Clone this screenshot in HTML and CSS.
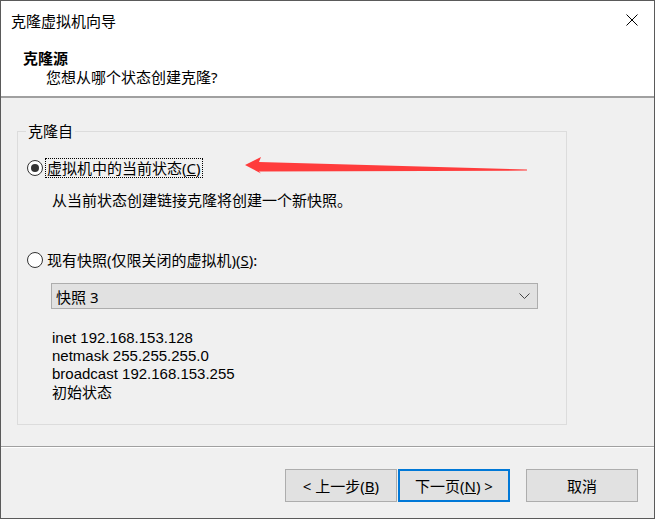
FILE: index.html
```html
<!DOCTYPE html>
<html lang="zh-CN">
<head>
<meta charset="UTF-8">
<meta name="viewport" content="width=device-width, initial-scale=1.0">
<title>克隆虚拟机向导</title>
<link rel="stylesheet" href="styles.css">
</head>
<body>

<div class="wizard">
  <div class="wizard-top">
    <div class="titlebar">
      <span class="titlebar-text">克隆虚拟机向导</span>
      <svg class="close-icon" width="12" height="12" viewBox="0 0 12 12">
        <path d="M0.5 0.5 L11.5 11.5 M11.5 0.5 L0.5 11.5" stroke="#000" stroke-width="1" fill="none"/>
      </svg>
    </div>
    <div class="header">
      <div class="header-title">克隆源</div>
      <div class="header-sub">您想从哪个状态创建克隆?</div>
    </div>
  </div>

  <div class="wizard-body">
    <fieldset class="group">
      <legend class="group-legend">克隆自</legend>
      <div class="group-content">
        <div class="radio-row">
          <span class="radio checked"></span>
          <span class="radio-label focused">虚拟机中的当前状态(<u>C</u>)</span>
        </div>
        <div class="note">从当前状态创建链接克隆将创建一个新快照。</div>

        <div class="radio-row second">
          <span class="radio"></span>
          <span class="radio-label">现有快照(仅限关闭的虚拟机)(<u>S</u>):</span>
        </div>

        <div class="select">
          <span>快照 3</span>
          <svg width="11" height="6" viewBox="0 0 11 6">
            <polyline points="0.5,0.5 5.5,5.5 10.5,0.5" stroke="#444" stroke-width="1" fill="none"/>
          </svg>
        </div>

        <div class="snapshot-info">
          <div>inet 192.168.153.128</div>
          <div>netmask 255.255.255.0</div>
          <div>broadcast 192.168.153.255</div>
          <div class="cjk">初始状态</div>
        </div>
      </div>
    </fieldset>
  </div>

  <div class="footer">
    <button class="btn">&lt; 上一步(<u>B</u>)</button>
    <button class="btn btn-default">下一页(<u>N</u>) &gt;</button>
    <button class="btn btn-cancel">取消</button>
  </div>

  <!-- annotation arrow drawn over the dialog -->
  <svg class="annotation" width="655" height="519" viewBox="0 0 655 519">
    <polygon points="245,165 261,157 259,162 527,169.6 527,170.6 259,171.5 261,173.5" fill="#ff3c3c"/>
  </svg>
</div>

</body>
</html>
```

FILE: styles.css
```css
* {
  box-sizing: border-box;
}
body {
  margin: 0;
  font-family: "Noto Sans", "Noto Sans CJK SC", sans-serif;
  font-size: 15px;
  color: #000;
}
.wizard {
  position: relative;
  width: 655px;
  height: 519px;
  border: 1px solid #5a5a5a;
  background: #f0f0f0;
  display: flex;
  flex-direction: column;
}
.wizard-top {
  background: #fff;
  height: 97px;
  border-bottom: 2px solid #a0a0a0;
  flex-shrink: 0;
}
.titlebar {
  height: 39px;
  display: flex;
  align-items: center;
  justify-content: space-between;
  padding: 0 16px 0 10px;
}
.titlebar-text {
  line-height: 20px;
}
.close-icon {
  margin-top: -1px;
}
.header {
  padding-top: 9px;
  line-height: 19px;
}
.header-title {
  font-weight: bold;
  padding-left: 22px;
}
.header-sub {
  padding-left: 45px;
}
.wizard-body {
  flex: 1;
  padding: 23px 0 0 16px;
}
.group {
  margin: 0;
  padding: 0;
  width: 550px;
  border: 1px solid #dcdcdc;
  min-width: 0;
}
.group-legend {
  margin-left: 8px;
  padding: 0 2px;
  line-height: 20px;
}
.group-content {
  padding: 17px 0 23px 9px;
}
.radio-row {
  display: flex;
  align-items: center;
  height: 20px;
}
.radio-row.second {
  margin-top: 40px;
}
.radio {
  width: 16px;
  height: 16px;
  border: 1px solid #333;
  border-radius: 50%;
  background: #fff;
  display: flex;
  align-items: center;
  justify-content: center;
}
.radio.checked::after {
  content: "";
  width: 8px;
  height: 8px;
  border-radius: 50%;
  background: #333;
}
.radio-label {
  margin-left: 3px;
  padding: 0 1px;
  line-height: 18px;
}
.radio-label.focused {
  outline: 1px dotted #000;
}
.note {
  margin-top: 12px;
  padding-left: 25px;
  line-height: 20px;
}
.select {
  margin: 13px 0 0 24px;
  width: 487px;
  height: 26px;
  border: 1px solid #adadad;
  background: #e1e1e1;
  display: flex;
  align-items: center;
  justify-content: space-between;
  padding: 0 7px 0 4px;
}
.snapshot-info {
  margin-top: 20px;
  padding-left: 25px;
  line-height: 18px;
  font-family: "Liberation Sans", "Noto Sans CJK SC", sans-serif;
}
.snapshot-info .cjk {
  font-family: "Noto Sans CJK SC", sans-serif;
  line-height: 18px;
  height: 18px;
  overflow: visible;
}
.footer {
  height: 72px;
  flex-shrink: 0;
  border-top: 1px solid #a0a0a0;
  box-shadow: inset 0 1px #fff;
  display: flex;
  justify-content: flex-end;
  align-items: flex-start;
  padding: 22px 16px 0 0;
}
.btn {
  width: 112px;
  height: 33px;
  border: 1px solid #adadad;
  background: #e1e1e1;
  font-family: inherit;
  font-size: 15px;
  color: #000;
  padding: 0;
}
.btn-default {
  margin-left: 1px;
  border: 2px solid #0078d7;
}
.btn-cancel {
  margin-left: 16px;
}
.annotation {
  position: absolute;
  left: -1px;
  top: -1px;
  pointer-events: none;
}
```
